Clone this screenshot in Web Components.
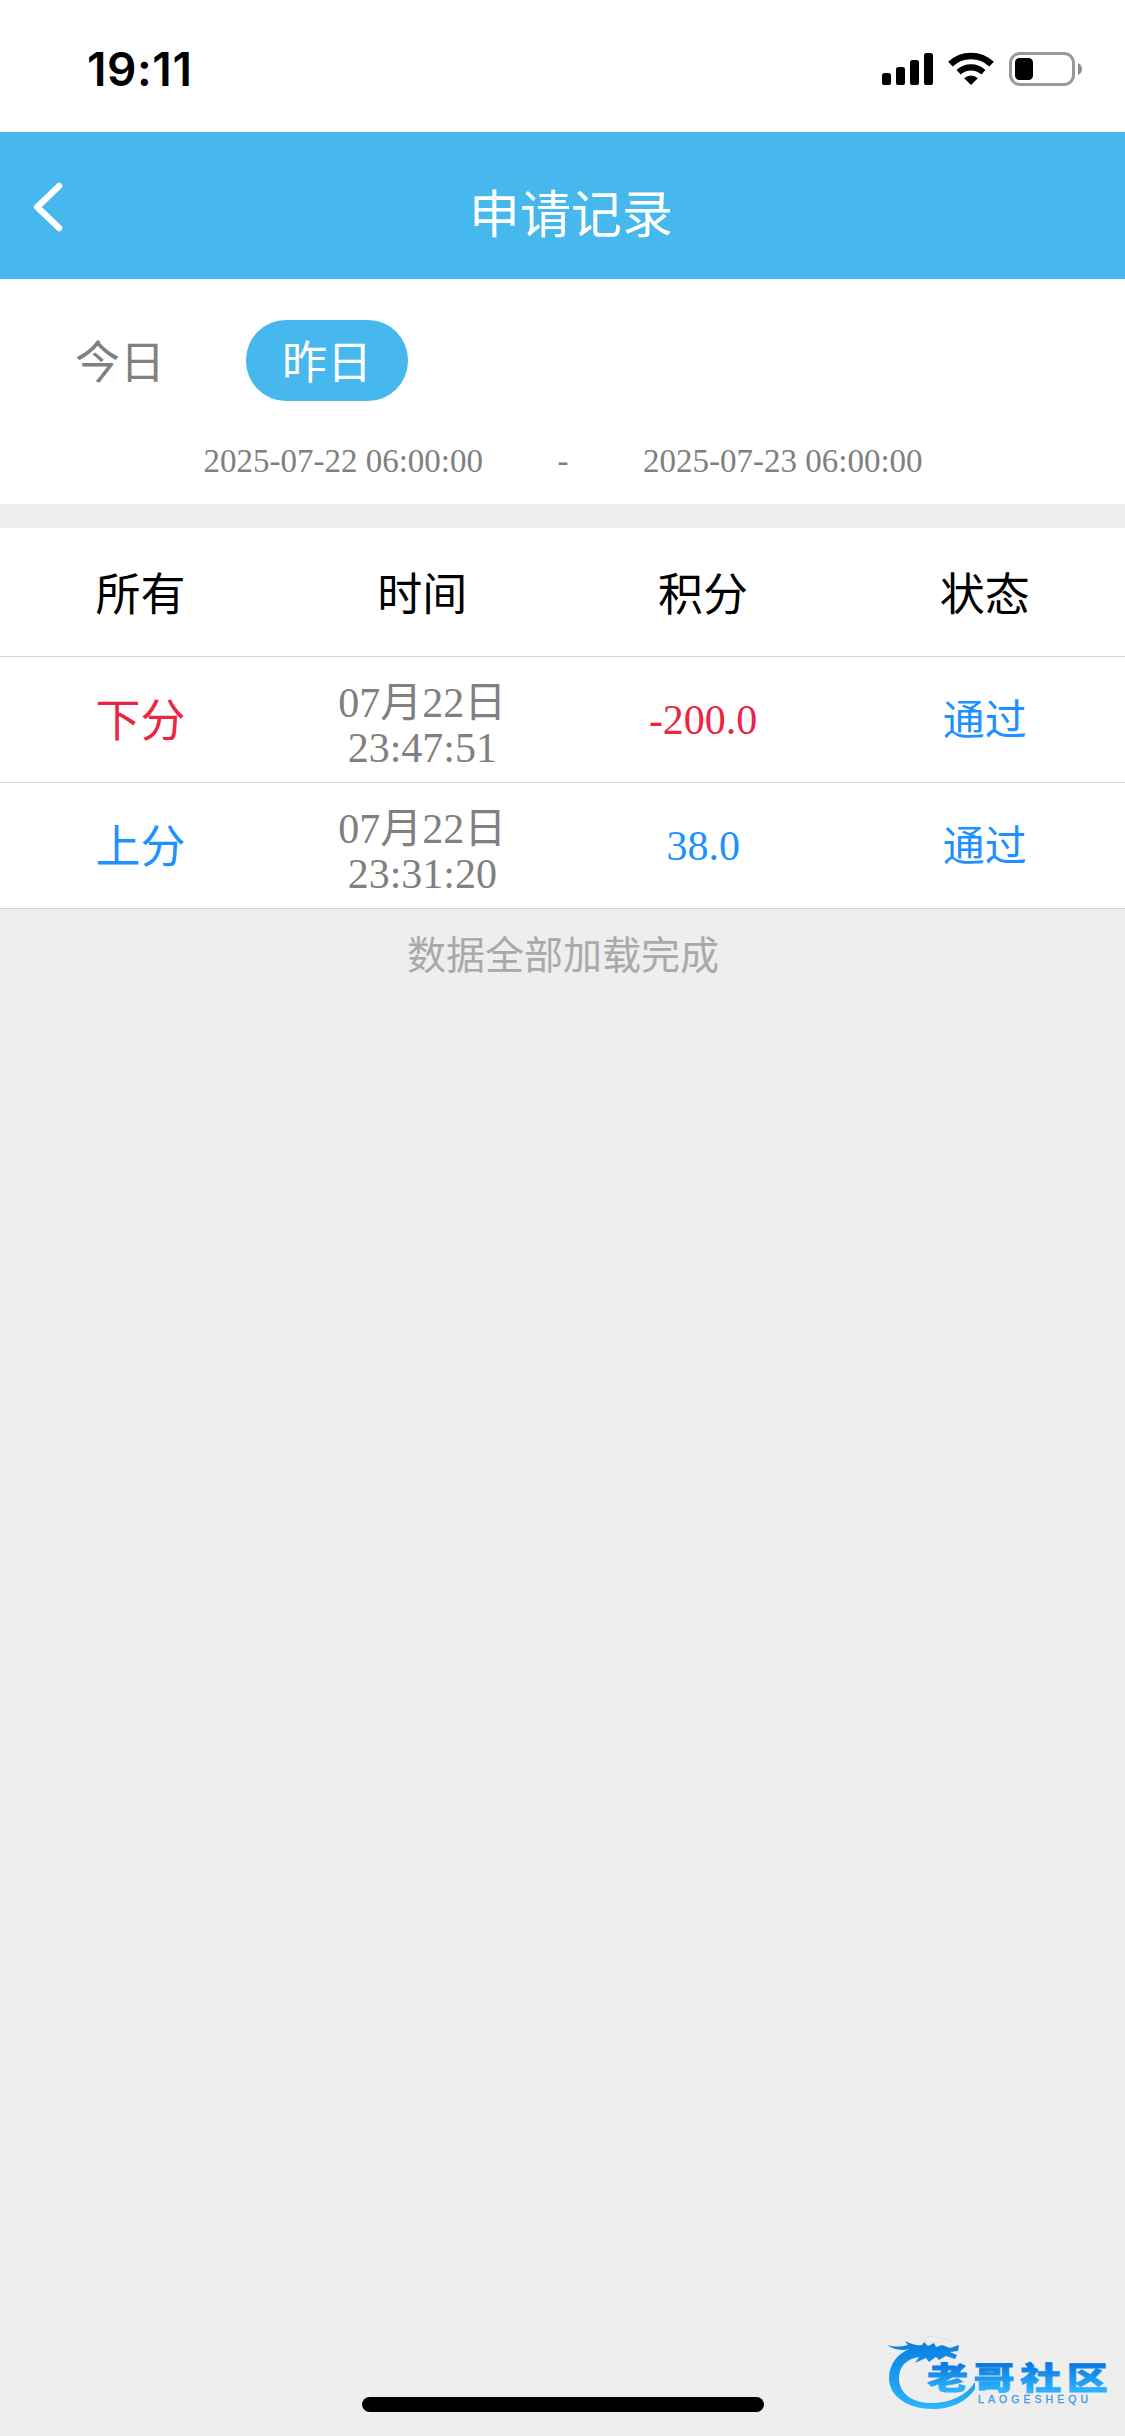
<!DOCTYPE html>
<html lang="zh-CN">
<head>
<meta charset="utf-8">
<title>申请记录</title>
<style>
html, body { margin: 0; height: 100%; background: #eee; }
body { font-family: "Liberation Serif", "Noto Sans CJK SC", serif; overflow: hidden; }
</style>
</head>
<body>
<record-page></record-page>
<script>
function define(name, html) {
  const template = document.createElement('template');
  template.innerHTML = html;
  customElements.define(name, class extends HTMLElement {
    constructor() {
      super();
      this.attachShadow({ mode: 'open' }).appendChild(template.content.cloneNode(true));
    }
  });
}

define('status-bar', `
<style>
:host { display: flex; height: 132px; background: #fff; box-sizing: border-box; padding: 42px 42px 0 87px; justify-content: space-between; align-items: flex-start; }
.time { font: 600 46px/54px Inter, sans-serif; letter-spacing: 0.6px; color: #000; }
svg { display: block; margin-top: 8px; }
</style>
<span class="time">19:11</span>
<svg width="201" height="38" viewBox="882 50 201 38">
  <rect x="882" y="73" width="9" height="12" rx="2.6"/>
  <rect x="896" y="67" width="9" height="18" rx="2.6"/>
  <rect x="910" y="60" width="9" height="25" rx="2.6"/>
  <rect x="924" y="53" width="9" height="32" rx="2.6"/>
  <g fill="none" stroke="#000">
    <path d="M950.4 64.2 A29.8 29.8 0 0 1 991.6 64.2" stroke-width="6.6"/>
    <path d="M958.6 72.2 A18.2 18.2 0 0 1 983.4 72.2" stroke-width="6.2"/>
  </g>
  <path d="M971 85 L964.2 78.2 A9.8 9.8 0 0 1 977.8 78.2 Z"/>
  <rect x="1010.5" y="53.5" width="63" height="31" rx="9.5" fill="none" stroke="#999" stroke-width="3"/>
  <rect x="1015" y="58" width="18" height="22" rx="4.5"/>
  <path d="M1078 63 Q1082 65 1082 69 T1078 75 Z" fill="#8c8c8c"/>
</svg>`);

define('nav-bar', `
<style>
:host { display: flex; height: 147px; background: #46b8ed; color: #fff; align-items: center; }
svg { display: block; flex: none; margin: 3px 0 0 32px; }
h1 { margin: 0; flex: 1; text-align: center; font-size: 51px; line-height: 60px; font-weight: 400; padding: 21px 47px 0 0; }
</style>
<svg width="32" height="52" viewBox="32 181 32 52" fill="none" stroke="#fff" stroke-width="6.4" stroke-linecap="round" stroke-linejoin="round"><path d="M59.1 186 L37.2 207 L59.1 228"/></svg>
<h1><slot></slot></h1>`);

define('day-tab', `
<style>
:host { display: block; box-sizing: border-box; width: 162px; height: 81px; padding-top: 4px; line-height: 81px; border-radius: 40px; font-size: 45px; text-align: center; color: #808080; }
:host([active]) { background: #46b8ed; color: #fff; }
</style><slot></slot>`);

define('date-filter', `
<style>
:host { display: block; height: 225px; background: #fff; box-sizing: border-box; padding-top: 41px; }
.tabs { display: flex; gap: 45px; padding-left: 39px; }
.range { display: flex; justify-content: center; gap: 74.5px; margin-top: 41px; padding-left: 1px; font-size: 33px; line-height: 38px; color: #808080; }
</style>
<div class="tabs"><slot name="tab"></slot></div>
<div class="range"><slot name="from"></slot><span>-</span><slot name="to"></slot></div>`);

define('record-row', `
<style>
:host { display: grid; grid-template-columns: repeat(4, 1fr); height: 126px; box-sizing: border-box; border-bottom: 1px solid #d6d6d6; background: #fff; align-items: center; text-align: center; font-size: 42px; line-height: 45px; color: #808080; --tone: #1e90ff; }
:host([head]) { height: 129px; font-size: 45px; color: #000; --tone: #000; --state: #000; }
:host([out]) { --tone: #ed2545; }
.kind { font-size: 45px; color: var(--tone); padding-top: 6px; }
.score { color: var(--tone); padding-top: 1px; }
.state { color: var(--state, #1e90ff); padding: 3px 0 0 1px; }
.time { padding: 12px 0 0 1px; }
:host([head]) span { padding-top: 8px; }
</style>
<span class="kind"><slot name="kind"></slot></span>
<span class="time"><slot name="time"></slot></span>
<span class="score"><slot name="score"></slot></span>
<span class="state"><slot name="state"></slot></span>`);

define('list-end', `
<style>:host { display: block; text-align: center; padding: 24px 0 0 1px; font-size: 39px; line-height: 45px; color: #a9a9a9; }</style><slot></slot>`);

define('home-indicator', `
<style>:host { display: block; position: absolute; left: 362px; bottom: 24px; width: 402px; height: 15px; border-radius: 7.5px; background: #000; }</style>`);

define('community-mark', `
<style>:host { display: block; position: absolute; right: 0; bottom: 0; } svg { display: block; }
.name { font: 900 41px "Noto Sans CJK SC", sans-serif; }
.latin { font: 400 10.5px "Liberation Sans", sans-serif; }</style>
<svg width="255" height="110" viewBox="0 0 255 110">
  <defs>
    <linearGradient id="ring" gradientUnits="userSpaceOnUse" x1="0" y1="16" x2="0" y2="82"><stop offset="0" stop-color="#087fe2"/><stop offset="1" stop-color="#2cb4fc"/></linearGradient>
    <linearGradient id="word" x1="0" y1="0" x2="0" y2="1"><stop offset=".25" stop-color="#0879df"/><stop offset=".85" stop-color="#2cb2ff"/></linearGradient>
  </defs>
  <path fill="url(#ring)" d="M17 19 Q27 22 38 19 L35 15 Q44 20 52 19 L54 16 L58 20 L64 17 L66 21 L72 19 L80 22 L89 19 L88 25 L80 26 L87 29 L85 33 L76 30 L69 34 L66 31 L59 36 L56 32 L45 37 L49 31 C35 33 29 42 29 52 C29 67 42 77 61 77 C80 77 96 70 105 56 L105 63 C97 76 80 83 64 83 C37 83 19 70 19 52 C19 38 28 27 40 23 Q27 26 17 19 Z"/>
  <path d="M45 12 Q56 18 70 16 M56 10 Q80 12 88 20" fill="none" stroke="#9cc9ec" stroke-width=".6" opacity=".5"/>
  <text class="name" transform="translate(57 62.5) scale(1 .75)" letter-spacing="5.6" fill="url(#word)" stroke="url(#word)" stroke-width="1">老哥社区</text>
  <text class="latin" x="108" y="77" textLength="110" fill="#3a9be8" stroke="#3a9be8" stroke-width=".3">LAOGESHEQU</text>
</svg>`);

define('record-page', `
<style>
:host { display: flex; flex-direction: column; position: relative; width: 1125px; height: 2436px; background: #eee; overflow: hidden; }
.list { margin-top: 24px; }
</style>
<status-bar></status-bar>
<nav-bar>申请记录</nav-bar>
<date-filter>
  <day-tab slot="tab">今日</day-tab><day-tab slot="tab" active>昨日</day-tab>
  <span slot="from">2025-07-22 06:00:00</span><span slot="to">2025-07-23 06:00:00</span>
</date-filter>
<div class="list">
  <record-row head><span slot="kind">所有</span><span slot="time">时间</span><span slot="score">积分</span><span slot="state">状态</span></record-row>
  <record-row out><span slot="kind">下分</span><span slot="time">07月22日<br>23:47:51</span><span slot="score">-200.0</span><span slot="state">通过</span></record-row>
  <record-row><span slot="kind">上分</span><span slot="time">07月22日<br>23:31:20</span><span slot="score">38.0</span><span slot="state">通过</span></record-row>
</div>
<list-end>数据全部加载完成</list-end>
<home-indicator></home-indicator>
<community-mark></community-mark>`);
</script>
</body>
</html>
